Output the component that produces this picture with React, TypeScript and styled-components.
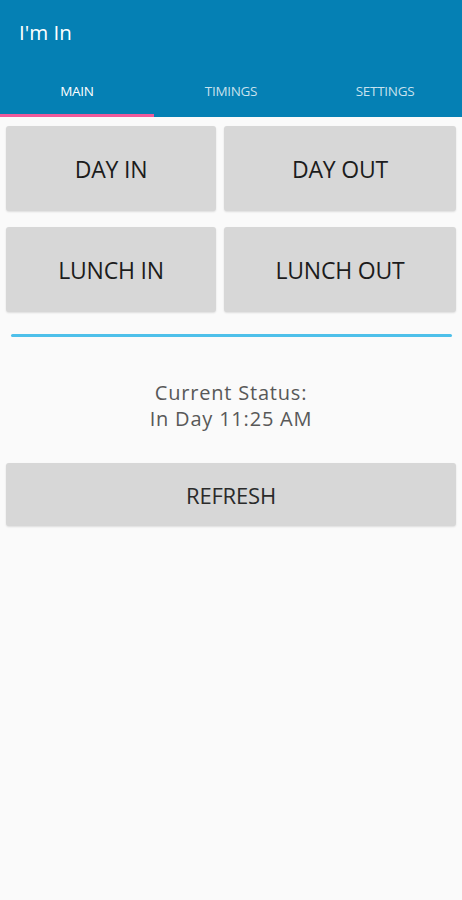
import styled, { createGlobalStyle } from "styled-components";

const GlobalStyle = createGlobalStyle`
  html, body {
    margin: 0;
    padding: 0;
    background: #fafafa;
  }
  body {
    font-family: "Open Sans", "Noto Sans", sans-serif;
  }
`;

const tabs = ["MAIN", "TIMINGS", "SETTINGS"];

export default function App() {
  return (
    <Page>
      <GlobalStyle />
      <Header>
        <Title>I'm In</Title>
        <Tabs>
          {tabs.map((t, i) => (
            <Tab key={t} active={i === 0}>
              {t}
            </Tab>
          ))}
        </Tabs>
      </Header>
      <Content>
        <ButtonGrid>
          <ActionButton>DAY IN</ActionButton>
          <ActionButton>DAY OUT</ActionButton>
          <ActionButton>LUNCH IN</ActionButton>
          <ActionButton>LUNCH OUT</ActionButton>
        </ButtonGrid>
        <Divider />
        <Status>
          Current Status:
          <br />
          In Day 11:25 AM
        </Status>
        <RefreshButton>REFRESH</RefreshButton>
      </Content>
    </Page>
  );
}

const Page = styled.div`
  width: 462px;
  min-height: 900px;
  background: #fafafa;
`;

const Header = styled.div`
  background: #0580b4;
  height: 117px;
  display: flex;
  flex-direction: column;
`;

const Title = styled.div`
  color: #ffffff;
  font-size: 20.5px;
  padding: 18px 0 0 19px;
  height: 46px;
`;

const Tabs = styled.div`
  display: flex;
  flex: 1;
`;

const Tab = styled.div<{ active?: boolean }>`
  flex: 1;
  display: flex;
  align-items: center;
  justify-content: center;
  color: ${(p) => (p.active ? "#ffffff" : "rgba(255,255,255,0.78)")};
  font-size: 13.5px;
  letter-spacing: -0.3px;
  padding-top: 3px;
  border-bottom: 3px solid ${(p) => (p.active ? "#f05a9b" : "transparent")};
`;

const Content = styled.div`
  padding: 9px 6px 0 6px;
  display: flex;
  flex-direction: column;
`;

const ButtonGrid = styled.div`
  display: grid;
  grid-template-columns: 210px 1fr;
  grid-auto-rows: 85px;
  column-gap: 8px;
  row-gap: 16px;
`;

const ActionButton = styled.button`
  border: none;
  border-radius: 3px;
  background: #d7d7d7;
  color: #1c1c1c;
  font-family: "Open Sans", "Noto Sans", sans-serif;
  font-size: 23px;
  letter-spacing: -0.2px;
  box-shadow: 0 1px 2px rgba(0, 0, 0, 0.12);
  padding: 0;
`;

const Divider = styled.div`
  height: 3px;
  background: #4ec0ea;
  margin: 22px 4px 0 5px;
  border-radius: 2px;
`;

const Status = styled.div`
  text-align: center;
  color: #585858;
  font-size: 20px;
  letter-spacing: 0.8px;
  line-height: 26px;
  margin-top: 43px;
`;

const RefreshButton = styled(ActionButton)`
  height: 63px;
  margin-top: 31px;
  font-size: 22px;
  color: #2a2a2a;
`;
